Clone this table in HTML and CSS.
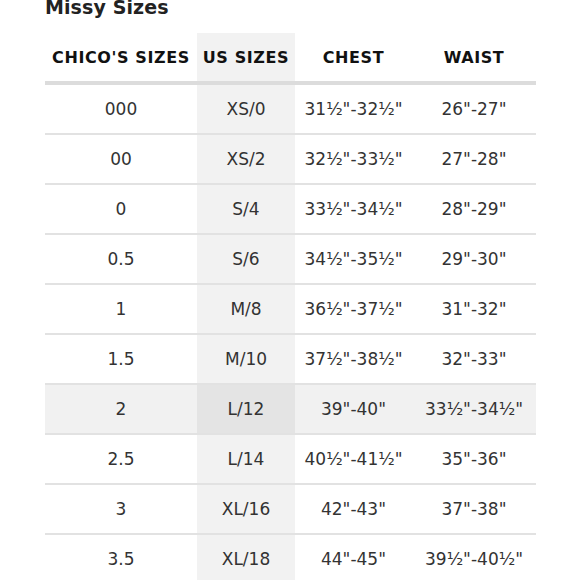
FILE: index.html
```html
<!DOCTYPE html>
<html>
<head>
<meta charset="utf-8">
<link rel="stylesheet" href="styles.css">
</head>
<body>
<div class="page">
  <h1 class="title">Missy Sizes</h1>
  <table class="size-table">
    <colgroup>
      <col class="c1"><col class="c2"><col class="c3"><col class="c4">
    </colgroup>
    <thead>
      <tr><th>CHICO'S SIZES</th><th class="us">US SIZES</th><th>CHEST</th><th>WAIST</th></tr>
    </thead>
    <tbody>
      <tr><td>000</td><td class="us">XS/0</td><td>31½"-32½"</td><td>26"-27"</td></tr>
      <tr><td>00</td><td class="us">XS/2</td><td>32½"-33½"</td><td>27"-28"</td></tr>
      <tr><td>0</td><td class="us">S/4</td><td>33½"-34½"</td><td>28"-29"</td></tr>
      <tr><td>0.5</td><td class="us">S/6</td><td>34½"-35½"</td><td>29"-30"</td></tr>
      <tr><td>1</td><td class="us">M/8</td><td>36½"-37½"</td><td>31"-32"</td></tr>
      <tr><td>1.5</td><td class="us">M/10</td><td>37½"-38½"</td><td>32"-33"</td></tr>
      <tr class="hl"><td>2</td><td class="us">L/12</td><td>39"-40"</td><td>33½"-34½"</td></tr>
      <tr><td>2.5</td><td class="us">L/14</td><td>40½"-41½"</td><td>35"-36"</td></tr>
      <tr><td>3</td><td class="us">XL/16</td><td>42"-43"</td><td>37"-38"</td></tr>
      <tr><td>3.5</td><td class="us">XL/18</td><td>44"-45"</td><td>39½"-40½"</td></tr>
    </tbody>
  </table>
</div>
</body>
</html>
```
FILE: styles.css
```css
html, body {
  margin: 0;
  padding: 0;
  background: #fff;
}
body {
  font-family: "DejaVu Sans", "Noto Sans", sans-serif;
  color: #222;
  overflow: hidden;
  height: 580px;
}
.page {
  padding-left: 45px;
}
.title {
  margin: -5px 0 0 0;
  height: 38px;
  font-size: 19px;
  line-height: 24px;
  font-weight: bold;
  color: #222;
  letter-spacing: 0.1px;
}
.size-table {
  border-collapse: collapse;
  table-layout: fixed;
  width: 491px;
}
.c1 { width: 152px; }
.c2 { width: 98px; }
.c3 { width: 117px; }
.c4 { width: 124px; }
.size-table th {
  height: 48px;
  padding: 0;
  font-size: 16px;
  font-weight: bold;
  color: #111;
  letter-spacing: 0.6px;
  text-align: center;
  border-bottom: 4px solid #dcdcdc;
  white-space: nowrap;
}
.size-table td {
  height: 48px;
  padding: 0;
  font-size: 17px;
  color: #333;
  text-align: center;
  border-bottom: 2px solid #e2e2e2;
  white-space: nowrap;
}
.size-table .us {
  background: #f2f2f2;
}
.size-table tr.hl td {
  background: #f1f1f1;
}
.size-table tr.hl td.us {
  background: #e4e4e4;
}
```
